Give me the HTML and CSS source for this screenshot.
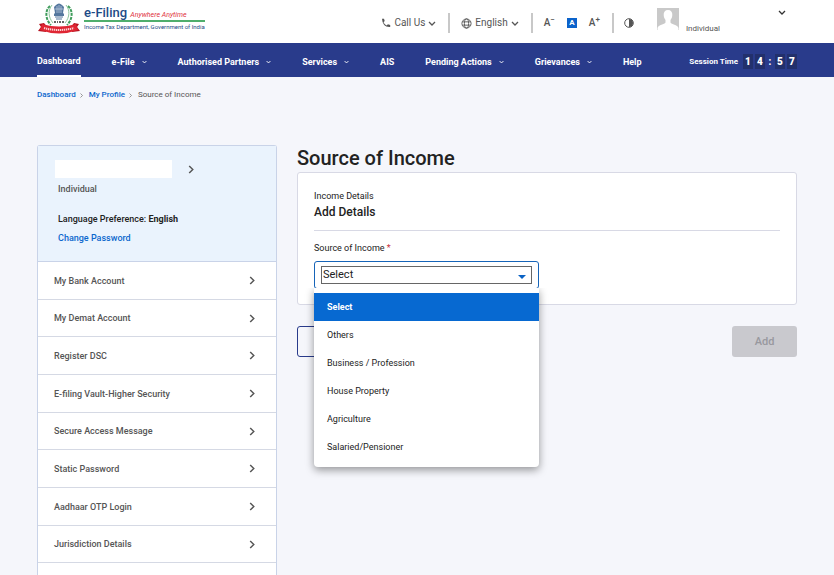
FILE: index.html
```html
<!DOCTYPE html>
<html lang="en">
<head>
  <meta charset="UTF-8">
  <meta name="viewport" content="width=device-width, initial-scale=1">
  <title>Source of Income</title>
  <link rel="stylesheet" href="styles.css">
</head>
<body>

<svg class="defs" aria-hidden="true">
  <symbol id="down" viewBox="0 0 8 5"><path d="M1 1l3 3 3-3"/></symbol>
  <symbol id="right" viewBox="0 0 6 10"><path d="M1 1l4 4-4 4"/></symbol>
</svg>

<header class="header">
  <a class="logo" href="#">
    <svg class="emblem" viewBox="0 0 44 32" aria-hidden="true">
      <path d="M13 4C8 8 8 17 14 23M31 4c5 4 5 13-1 19" fill="none" stroke="#3f9c5c" stroke-width="2" stroke-dasharray="3 1"/>
      <path d="M15 3C11 8 11 15 16 21M29 3c4 5 4 12-1 18" fill="none" stroke="#8cc59c" stroke-width="1"/>
      <path d="M19 3q3-3 6 0l2 2-1 6 1 1v2H17v-2l1-1-1-6z" fill="#55779e"/>
      <path d="M20 4v7M22 3v8M24 4v7M18 7h8" stroke="#c5d3e2" stroke-width=".7"/>
      <path d="M18 15h8M19 17h6" stroke="#55779e"/>
      <path d="M17 20h2m1 0h1m1 0h2m1 0h2" stroke="#333" stroke-width="1.3"/>
      <path d="M7 21l-5 1 2 3-3 4 8 1 2-4zM37 21l5 1-2 3 3 4-8 1-2-4z" fill="#b5121f"/>
      <path d="M5 22q17 5 34 0l2 6q-19 7-38 0z" fill="#df2633"/>
      <path d="M7 26q15 4 30 0" fill="none" stroke="#fbd3d3" stroke-width="2" stroke-dasharray="1.3 .7"/>
    </svg>
    <span class="brand">
      <span class="brand-top">e-Filing <i>Anywhere Anytime</i></span>
      <span class="brand-bottom">Income Tax Department, Government of India</span>
    </span>
  </a>
  <div class="tools">
    <button class="tool call">
      <svg class="ico" viewBox="0 0 10 10"><path d="M1 .8h2l.7 2.3-1.200 1.200q1 2.200 3.200 3.200l1.200-1.200 2.300.7v2Q1.500 9.500 1 .8z" fill="#555"/></svg>
      Call Us
      <svg class="down"><use href="#down"/></svg>
    </button>
    <button class="tool lang">
      <svg class="globe" viewBox="0 0 12 12" fill="none" stroke="#555"><circle cx="6" cy="6" r="5"/><ellipse cx="6" cy="6" rx="2.300" ry="5"/><path d="M1.500 4.200h9M1.500 7.800h9"/></svg>
      English
      <svg class="down"><use href="#down"/></svg>
    </button>
    <div class="sizes">
      <button class="tool" aria-label="Smaller text">A<sup>−</sup></button>
      <button class="tool size-on" aria-label="Normal text">A</button>
      <button class="tool" aria-label="Larger text">A<sup>+</sup></button>
    </div>
    <button class="tool contrast" aria-label="Contrast">
      <svg class="ico" viewBox="0 0 10 10"><circle cx="5" cy="5" r="4.300" fill="none" stroke="#555"/><path d="M5 1a4 4 0 010 8z" fill="#555"/></svg>
    </button>
    <button class="user">
      <svg class="avatar" viewBox="0 0 22 22"><path fill="#c9c9c9" d="M0 0h22v22H0z"/><path fill="#fff" d="M11 2c3 0 4.500 2 4.300 5-.1 3-1.300 4-1.800 5v2.500c1 2 7 2 8 5.500v2H.5v-2c1-3.500 7-3.500 8-5.500V12c-.5-1-1.700-2-1.800-5C6.500 4 8 2 11 2z"/></svg>
      <span class="user-type">Individual</span>
      <svg class="down"><use href="#down"/></svg>
    </button>
  </div>
</header>

<nav class="nav">
  <a class="active" href="#">Dashboard</a>
  <a href="#">e-File <svg class="caret"><use href="#down"/></svg></a>
  <a href="#">Authorised Partners <svg class="caret"><use href="#down"/></svg></a>
  <a href="#">Services <svg class="caret"><use href="#down"/></svg></a>
  <a href="#">AIS</a>
  <a href="#">Pending Actions <svg class="caret"><use href="#down"/></svg></a>
  <a href="#">Grievances <svg class="caret"><use href="#down"/></svg></a>
  <a href="#">Help</a>
  <div class="session">
    Session Time
    <span class="clock"><b>1</b><b>4</b><em>:</em><b>5</b><b>7</b></span>
  </div>
</nav>

<div class="crumbs">
  <a href="#">Dashboard</a>
  <svg class="sep"><use href="#right"/></svg>
  <a href="#">My Profile</a>
  <svg class="sep"><use href="#right"/></svg>
  <span>Source of Income</span>
</div>

<main class="page">
  <aside class="sidebar">
    <div class="profile">
      <div class="name-row">
        <span class="name"></span>
        <svg class="right"><use href="#right"/></svg>
      </div>
      <p class="type">Individual</p>
      <p class="pref">Language Preference: <b>English</b></p>
      <a class="change" href="#">Change Password</a>
    </div>
    <ul class="menu">
      <li><a href="#">My Bank Account <svg class="right"><use href="#right"/></svg></a></li>
      <li><a href="#">My Demat Account <svg class="right"><use href="#right"/></svg></a></li>
      <li><a href="#">Register DSC <svg class="right"><use href="#right"/></svg></a></li>
      <li><a href="#">E-filing Vault-Higher Security <svg class="right"><use href="#right"/></svg></a></li>
      <li><a href="#">Secure Access Message <svg class="right"><use href="#right"/></svg></a></li>
      <li><a href="#">Static Password <svg class="right"><use href="#right"/></svg></a></li>
      <li><a href="#">Aadhaar OTP Login <svg class="right"><use href="#right"/></svg></a></li>
      <li><a href="#">Jurisdiction Details <svg class="right"><use href="#right"/></svg></a></li>
    </ul>
  </aside>

  <section class="content">
    <h1>Source of Income</h1>
    <div class="card">
      <p class="sub">Income Details</p>
      <h2>Add Details</h2>
      <label for="source">Source of Income <span class="req">*</span></label>
      <div class="field">
        <select id="source">
          <option>Select</option>
          <option>Others</option>
          <option>Business / Profession</option>
          <option>House Property</option>
          <option>Agriculture</option>
          <option>Salaried/Pensioner</option>
        </select>
        <svg class="arrow" viewBox="0 0 8 4"><path d="M0 0h8L4 4z" fill="#0a62c4"/></svg>
        <ul class="options" role="listbox" aria-label="Source of Income">
          <li class="selected" role="option" aria-selected="true">Select</li>
          <li role="option">Others</li>
          <li role="option">Business / Profession</li>
          <li role="option">House Property</li>
          <li role="option">Agriculture</li>
          <li role="option">Salaried/Pensioner</li>
        </ul>
      </div>
    </div>
    <div class="actions">
      <button class="btn outline" aria-label="Cancel"></button>
      <button class="btn add" disabled>Add</button>
    </div>
  </section>
</main>

</body>
</html>
```

FILE: styles.css
```css
* {
  box-sizing: border-box;
}

body {
  margin: 0;
  min-height: 100vh;
  display: flex;
  flex-direction: column;
  background: #f5f6fb;
  color: #222;
  font-family: Roboto, sans-serif;
  font-size: 9px;
  line-height: 12px;
}

h1, h2, p, ul {
  margin: 0;
  padding: 0;
}

ul {
  list-style: none;
}

a {
  color: inherit;
  text-decoration: none;
}

button {
  font: inherit;
  color: inherit;
  background: none;
  border: none;
  padding: 0;
}

.defs {
  position: absolute;
  width: 0;
  height: 0;
}

.down, .caret, .right, .sep {
  fill: none;
  stroke: currentColor;
  flex: none;
}

.down {
  width: 8px;
  height: 5px;
  stroke-width: 1.3;
}

.caret {
  width: 5px;
  height: 4px;
  stroke-width: 1.5;
}

.right {
  width: 6px;
  height: 9px;
  stroke-width: 1.6;
  color: #555;
}

.sep {
  width: 3px;
  height: 5px;
  stroke-width: 1.5;
  color: #777;
}

/* header */
.header {
  display: flex;
  justify-content: space-between;
  height: 43px;
  padding: 0 48px 0 37px;
  background: #fff;
}

.logo {
  display: flex;
  gap: 3px;
}

.emblem {
  width: 44px;
  height: 32px;
  margin-top: 2px;
}

.brand {
  padding-top: 6px;
  color: #1d4a86;
  white-space: nowrap;
}

.brand-top {
  display: block;
  height: 16px;
  border-bottom: 2px solid #4fae6c;
  font-size: 13px;
  font-weight: 500;
  line-height: 14px;
}

.brand-top i {
  font-size: 7px;
  font-weight: 400;
  color: #e0303c;
}

.brand-bottom {
  display: block;
  font-size: 6px;
  line-height: 9px;
}

.tools {
  display: flex;
  color: #555;
  font-size: 10px;
}

.tool {
  display: flex;
  align-items: center;
  gap: 3px;
}

.tools > .tool, .sizes {
  height: 20px;
  margin-top: 13px;
}

.ico {
  width: 10px;
  height: 10px;
}

.globe {
  width: 11px;
  height: 11px;
}

.call {
  padding-right: 12px;
}

.lang {
  padding: 0 12px 0 11px;
}

.sizes {
  display: flex;
  align-items: center;
  gap: 12px;
  padding: 0 12px 0 11px;
  font-size: 10px;
  font-weight: 500;
}

.lang, .sizes, .contrast {
  border-left: 2px solid #c8c8c8;
}

.sizes .tool {
  gap: 0;
}

.sizes sup {
  font-size: 8px;
  line-height: 6px;
  align-self: flex-start;
}

.sizes .size-on {
  justify-content: center;
  width: 10px;
  height: 10px;
  background: #0b63cb;
  color: #fff;
  font-size: 8px;
  font-weight: bold;
}

.contrast {
  padding-left: 10px;
}

.user {
  display: flex;
  align-items: flex-start;
  padding: 8px 0 0 23px;
}

.avatar {
  width: 22px;
  height: 22px;
  margin-right: 7px;
}

.user-type {
  margin: 15px 58px 0 0;
  font-size: 8px;
}

.user .down {
  margin-top: 2px;
  color: #333;
}

/* main navigation */
.nav {
  display: flex;
  gap: 31px;
  height: 34px;
  padding: 0 37px;
  background: #293b8b;
  color: #fff;
  font-weight: 700;
  white-space: nowrap;
}

.nav a {
  display: flex;
  align-items: center;
  gap: 7px;
  padding-top: 3px;
}

.nav .active {
  border-bottom: 2px solid #fff;
}

.session {
  display: flex;
  align-items: center;
  gap: 5px;
  margin-left: auto;
  padding-top: 3px;
  font-size: 8px;
}

.clock {
  display: flex;
  gap: 2px;
  font-size: 10px;
  line-height: 15px;
  text-align: center;
}

.clock b {
  width: 10px;
  background: #22306c;
}

.clock em {
  width: 6px;
  font-style: normal;
}

.crumbs {
  display: flex;
  align-items: center;
  gap: 4px;
  padding: 12px 37px;
  color: #555;
  font-size: 8px;
}

.crumbs a {
  color: #0b67cd;
  font-weight: 500;
}

.sep + a, .sep + span {
  margin-left: 2px;
}

.page {
  flex: 1;
  display: flex;
  gap: 20px;
  padding: 32px 37px 0;
}

/* sidebar */
.sidebar {
  display: flex;
  flex-direction: column;
  width: 240px;
  flex: none;
  border: 1px solid #c9d3e8;
  border-bottom: none;
  border-radius: 3px 3px 0 0;
  background: #fff;
  color: #555;
  font-weight: 500;
}

.profile {
  height: 116px;
  padding: 14px 20px 0;
  background: #eaf3fd;
  border-bottom: 1px solid #c9d3e8;
}

.name-row {
  display: flex;
  align-items: center;
  gap: 16px;
  margin-left: -3px;
}

.name {
  width: 117px;
  height: 18px;
  background: #fff;
}

.type {
  margin-top: 5px;
}

.pref {
  margin: 18px 0 7px;
  color: #222;
}

.change {
  color: #0b67cd;
}

.menu li {
  height: 38px;
  border-bottom: 1px solid #d5d9e4;
}

.menu li:nth-child(3n + 2) {
  height: 37px;
}

.menu a {
  display: flex;
  align-items: center;
  justify-content: space-between;
  height: 100%;
  padding: 0 21px 0 16px;
}

/* form */
.content {
  flex: 1;
}

h1 {
  font-size: 20px;
  font-weight: 500;
  line-height: 27px;
}

.card {
  height: 133px;
  padding: 17px 16px 0;
  background: #fff;
  border: 1px solid #d8d9e5;
  border-radius: 3px;
}

h2 {
  padding: 2px 0 10px;
  margin-bottom: 11px;
  border-bottom: 1px solid #d8d9e5;
  font-size: 12px;
  font-weight: 500;
  line-height: 16px;
}

.card label {
  display: block;
}

.req {
  color: #c9303c;
}

.field {
  position: relative;
  width: 225px;
  margin-top: 7px;
  padding: 4px 6px;
  border: 1px solid #1664b8;
  border-radius: 3px;
}

.field select {
  display: block;
  width: 100%;
  height: 18px;
  padding: 0 1px;
  appearance: none;
  background: #fff;
  border: 1px solid #666;
  border-radius: 0;
  color: #222;
  font: 11px/16px Roboto, sans-serif;
}

.arrow {
  position: absolute;
  top: 13px;
  right: 12px;
  width: 8px;
  height: 4px;
}

.options {
  position: absolute;
  top: 26px;
  left: -1px;
  right: -1px;
  padding: 5px 0 6px;
  background: #fff;
  border-radius: 0 0 4px 4px;
  box-shadow: 0 3px 8px rgba(0, 0, 0, 0.4);
  clip-path: inset(0 -12px -14px -12px);
}

.options li {
  padding: 8px 13px;
}

.options .selected {
  background: #0769d1;
  color: #fff;
  font-weight: 700;
}

.actions {
  display: flex;
  justify-content: space-between;
  margin-top: 21px;
}

.btn {
  width: 65px;
  height: 31px;
  border-radius: 3px;
}

.outline {
  border: 1px solid #293b8b;
}

.add {
  background: #c9c9ce;
  color: #98989e;
  font-size: 11px;
  font-weight: 500;
}
```
